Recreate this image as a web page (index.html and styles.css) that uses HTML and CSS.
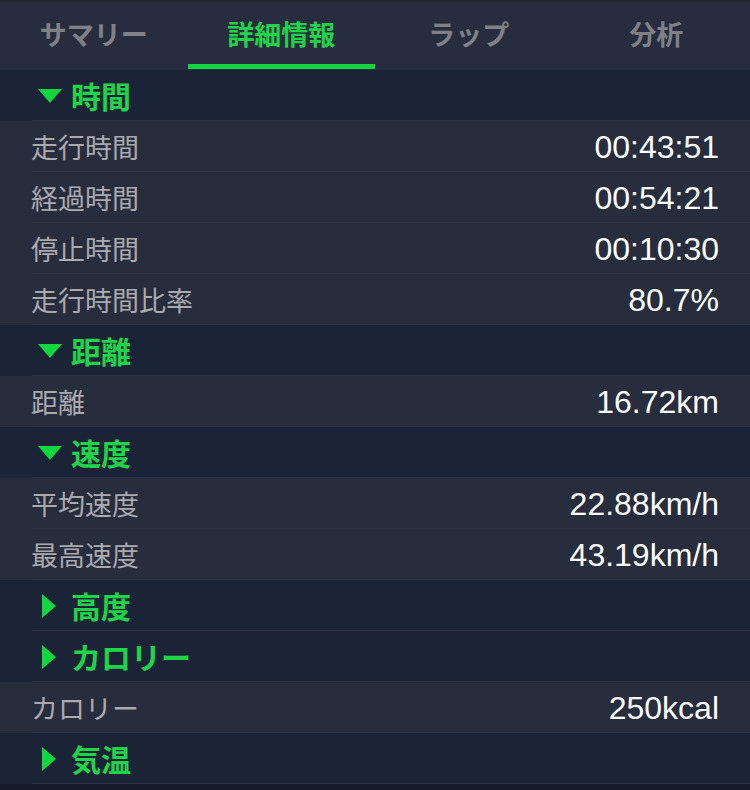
FILE: index.html
```html
<!DOCTYPE html>
<html lang="ja">
<head>
<meta charset="utf-8">
<link rel="stylesheet" href="styles.css">
</head>
<body>
<div class="screen">
  <nav class="tabs">
    <div class="tab">サマリー</div>
    <div class="tab active">詳細情報</div>
    <div class="tab">ラップ</div>
    <div class="tab">分析</div>
  </nav>
  <div class="list">
    <div class="section"><span class="tri down"></span><span class="stitle">時間</span></div>
    <div class="row"><span class="label">走行時間</span><span class="value">00:43:51</span></div>
    <div class="row"><span class="label">経過時間</span><span class="value">00:54:21</span></div>
    <div class="row"><span class="label">停止時間</span><span class="value">00:10:30</span></div>
    <div class="row"><span class="label">走行時間比率</span><span class="value">80.7%</span></div>
    <div class="section"><span class="tri down"></span><span class="stitle">距離</span></div>
    <div class="row"><span class="label">距離</span><span class="value">16.72km</span></div>
    <div class="section"><span class="tri down"></span><span class="stitle">速度</span></div>
    <div class="row"><span class="label">平均速度</span><span class="value">22.88km/h</span></div>
    <div class="row"><span class="label">最高速度</span><span class="value">43.19km/h</span></div>
    <div class="section"><span class="tri right"></span><span class="stitle">高度</span></div>
    <div class="section"><span class="tri right"></span><span class="stitle">カロリー</span></div>
    <div class="row"><span class="label">カロリー</span><span class="value">250kcal</span></div>
    <div class="section"><span class="tri right"></span><span class="stitle">気温</span></div>
  </div>
</div>
</body>
</html>
```
FILE: styles.css
```css
* { box-sizing: border-box; }
html, body { margin: 0; padding: 0; }
body {
  background: #161c2b;
  font-family: "Noto Sans CJK JP", "Noto Sans", sans-serif;
  width: 750px;
  height: 790px;
  overflow: hidden;
}
.screen { display: flex; flex-direction: column; }
.tabs {
  display: flex;
  height: 70px;
  background: #272d3e;
  border-top: 2px solid #1f2433;
  padding-bottom: 1px;
}
.tab {
  flex: 1;
  display: flex;
  align-items: center;
  justify-content: center;
  padding-top: 1px;
  border-bottom: 5px solid transparent;
  color: #7f8187;
  font-size: 27px;
  font-weight: 700;
  line-height: 1;
}
.tab.active {
  color: #1fd448;
  border-bottom-color: #12d640;
}
.list { display: flex; flex-direction: column; }
.section, .row {
  height: 51px;
  display: flex;
  align-items: center;
  position: relative;
}
.section::after, .row::after {
  content: "";
  position: absolute;
  left: 32px;
  right: 0;
  bottom: 0;
  height: 1px;
  background: #2d3345;
}
.section { background: #1b2336; padding-left: 38px; }
.row {
  background: #282d3e;
  padding: 0 31px 0 31px;
  justify-content: space-between;
}
.tri { display: block; width: 0; height: 0; }
.tri.down {
  border-left: 12px solid transparent;
  border-right: 12px solid transparent;
  border-top: 14px solid #12d640;
  margin-right: 9px;
}
.tri.right {
  border-top: 12px solid transparent;
  border-bottom: 12px solid transparent;
  border-left: 14px solid #12d640;
  margin-left: 4px;
  margin-right: 15px;
}
.stitle {
  color: #1fd448;
  font-size: 30px;
  font-weight: 700;
  line-height: 1;
  margin-top: -2px;
}
.label {
  color: #a9a9ae;
  font-size: 27px;
  line-height: 1;
}
.value {
  color: #ffffff;
  font-family: "Liberation Sans", "Noto Sans CJK JP", sans-serif;
  font-size: 32px;
  line-height: 1;
}
```
